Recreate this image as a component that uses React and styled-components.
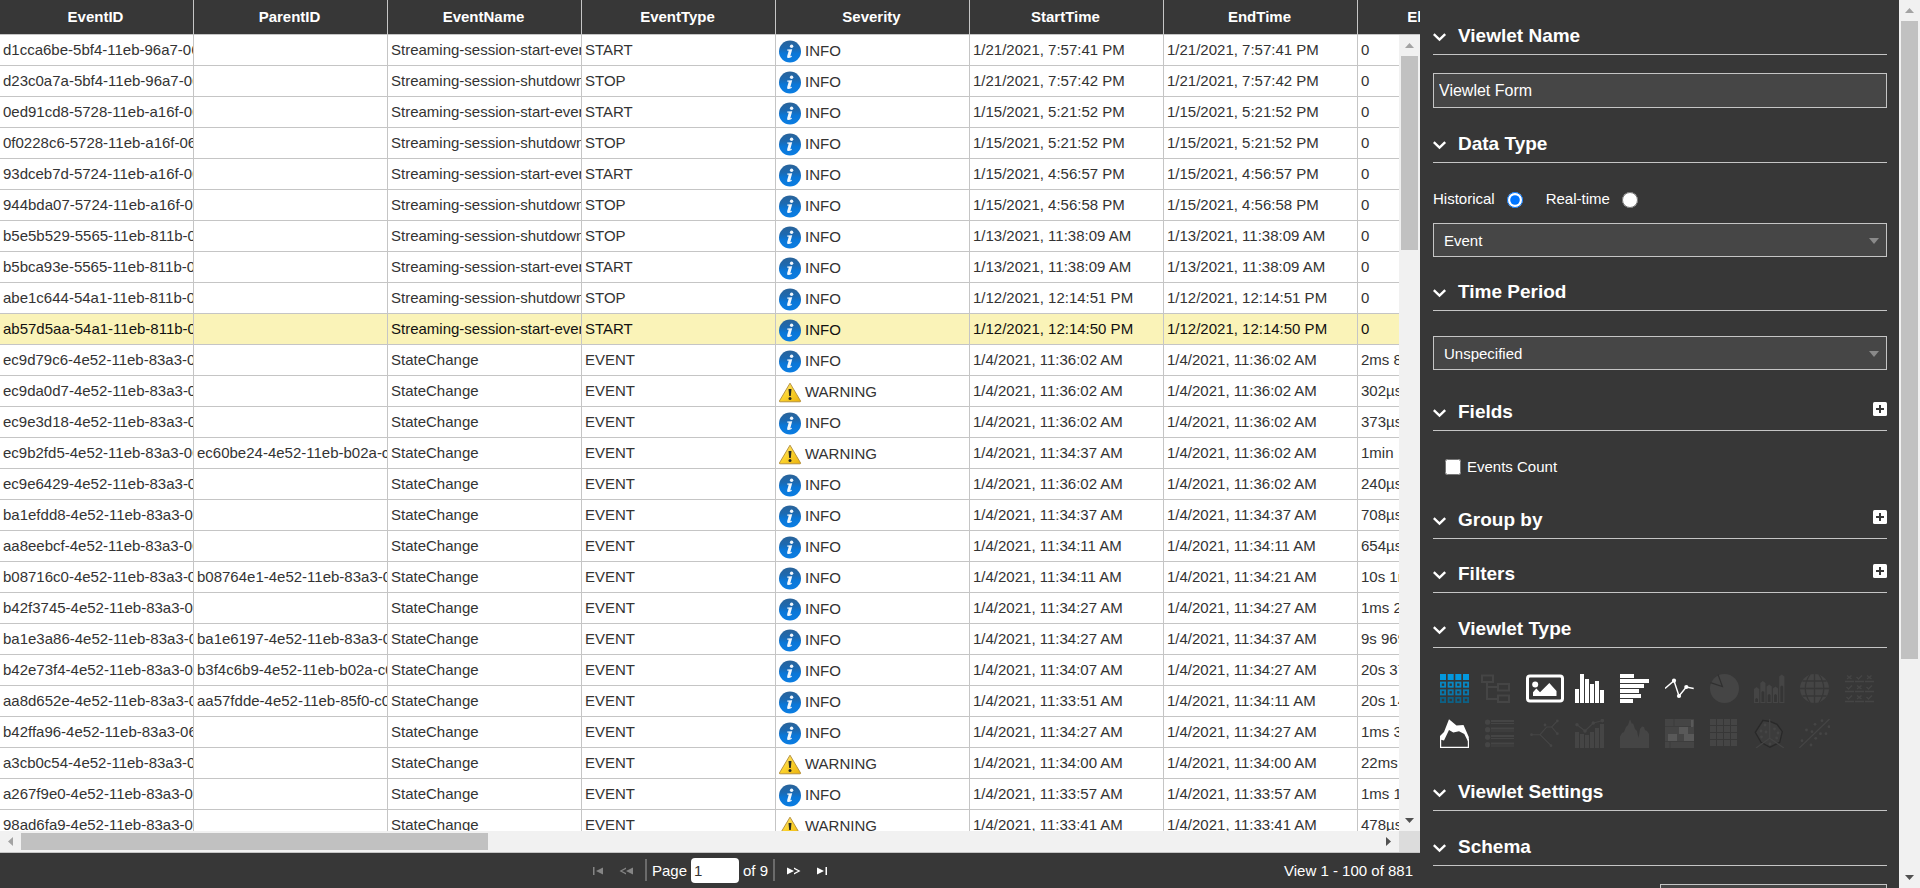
import React from "react";
import styled, { createGlobalStyle } from "styled-components";

const c = {
  dark: "#373737",
  field: "#464646",
  line: "#c5c5c5",
  text: "#333333",
  dim: "#454545",
  track: "#f1f1f1",
  thumb: "#c1c1c1",
  highlight: "#faf3b8",
};

const GlobalStyle = createGlobalStyle`
  * { box-sizing: border-box; }
  body {
    margin: 0;
    overflow: hidden;
    background: ${c.dark};
    font-family: "Liberation Sans", Arial, sans-serif;
    font-size: 15px;
  }
  button, input, select { font: inherit; }
`;

/* ---------- page frame ---------- */

const Page = styled.div`
  display: flex;
  height: 100vh;
`;

const GridPane = styled.main`
  flex: 1;
  min-width: 0;
  display: flex;
  flex-direction: column;
`;

const SidePanel = styled.aside`
  width: 479px;
  flex: none;
  overflow: hidden;
  padding: 18px 12px 0 13px;
  background: ${c.dark};
  color: #ffffff;
`;

/* ---------- scroll bars ---------- */

const Bar = styled.div`
  display: flex;
  flex: none;
  flex-direction: ${(p) => (p.$horizontal ? "row" : "column")};
  ${(p) => (p.$horizontal ? "height: 21px;" : "width: 21px;")}
  background: ${c.track};
`;

const BarButton = styled.button`
  display: grid;
  place-items: center;
  flex: none;
  width: 21px;
  height: 21px;
  padding: 0;
  border: 0;
  background: none;
  color: ${(p) => (p.$off ? "#a3a3a3" : "#505050")};
`;

const Track = styled.div`
  display: flex;
  flex: 1;
  min-width: 0;
  min-height: 0;
  flex-direction: ${(p) => (p.$horizontal ? "row" : "column")};
  padding: ${(p) => (p.$horizontal ? "2px 0" : "0 2px")};
`;

const Thumb = styled.div`
  flex: 0 0 ${(p) => p.$share}%;
  background: ${c.thumb};
`;

const arrows = {
  up: "M0 7 L4.5 2 L9 7 Z",
  down: "M0 2 L9 2 L4.5 7 Z",
  left: "M7 0 L7 9 L2 4.5 Z",
  right: "M2 0 L7 4.5 L2 9 Z",
};

const Arrow = ({ dir }) => (
  <svg width="9" height="9" viewBox="0 0 9 9" aria-hidden="true">
    <path d={arrows[dir]} fill="currentColor" />
  </svg>
);

const ScrollBar = ({ horizontal, share }) => (
  <Bar $horizontal={horizontal}>
    <BarButton $off aria-label={horizontal ? "Scroll left" : "Scroll up"}>
      <Arrow dir={horizontal ? "left" : "up"} />
    </BarButton>
    <Track $horizontal={horizontal}>
      <Thumb $share={share} />
    </Track>
    <BarButton aria-label={horizontal ? "Scroll right" : "Scroll down"}>
      <Arrow dir={horizontal ? "right" : "down"} />
    </BarButton>
  </Bar>
);

/* ---------- event table ---------- */

const HeadClip = styled.div`
  flex: none;
  overflow: hidden;
  background: ${c.dark};
  border-bottom: 1px solid ${c.line};
`;

const BodyArea = styled.div`
  flex: 1;
  min-height: 0;
  display: flex;
`;

const BodyClip = styled.div`
  flex: 1;
  min-width: 0;
  overflow: hidden;
  background: #ffffff;
`;

const BottomScroll = styled.div`
  display: flex;
  flex: none;
  border-bottom: 1px solid ${c.line};

  & > :first-child { flex: 1; }
`;

const Corner = styled.div`
  width: 21px;
  background: #dcdcdc;
`;

const Table = styled.table`
  width: 1552px;
  table-layout: fixed;
  border-collapse: separate;
  border-spacing: 0;
`;

const HeadCell = styled.th`
  width: 194px;
  height: 34px;
  padding: 0 2px 2px 0;
  border-right: 1px solid ${c.line};
  color: #ffffff;
  font-weight: bold;
  text-align: center;
`;

const Row = styled.tr`
  background: ${(p) => (p.$selected ? c.highlight : "#ffffff")};
  color: ${(p) => (p.$selected ? "#111111" : c.text)};
`;

const Cell = styled.td`
  width: 194px;
  height: 31px;
  padding: 0 0 0 3px;
  overflow: hidden;
  white-space: nowrap;
  line-height: 30px;
  border-right: 1px solid ${c.line};
  border-bottom: 1px solid ${c.line};
`;

const Severity = styled.div`
  display: flex;
  align-items: center;
  gap: 3px;
  height: 30px;
  padding-top: 2px;
`;

const InfoIcon = () => (
  <svg width="23" height="24" viewBox="1 0 23 24" aria-hidden="true">
    <defs>
      <linearGradient id="infoFill" x1="0" y1="0" x2="0" y2="1">
        <stop offset="0" stopColor="#2a6399" />
        <stop offset="0.35" stopColor="#1d69b0" />
        <stop offset="0.6" stopColor="#0a77d8" />
        <stop offset="1" stopColor="#0b7de2" />
      </linearGradient>
    </defs>
    <circle cx="12" cy="12.5" r="11" fill="url(#infoFill)" />
    <circle cx="13.6" cy="7.2" r="1.7" fill="#f2f7fc" />
    <path d="M9.3 10.6 L14.2 10.2 L12.3 17.2 L13.9 16.8 L13.6 18 Q11.8 19.2 10 19.1 Q8.7 18.9 9.2 17 L10.7 11.7 L9 11.6 Z" fill="#f2f7fc" />
  </svg>
);

const WarningIcon = () => (
  <svg width="23" height="24" viewBox="1 0 23 24" aria-hidden="true">
    <defs>
      <linearGradient id="warnFill" x1="0" y1="0" x2="1" y2="1">
        <stop offset="0" stopColor="#ffe98a" />
        <stop offset="0.5" stopColor="#fbd22c" />
        <stop offset="1" stopColor="#eab20e" />
      </linearGradient>
    </defs>
    <path d="M12 3.2 L22.6 21 Q22.8 21.8 22 21.8 L2 21.8 Q1.2 21.8 1.4 21 Z" fill="url(#warnFill)" stroke="#b08a35" strokeWidth="0.9" strokeLinejoin="round" />
    <path d="M10.5 9 H13.5 L12.8 16 H11.2 Z" fill="#2a2a20" />
    <circle cx="12" cy="18.6" r="1.5" fill="#2a2a20" />
  </svg>
);

const columns = ["EventID", "ParentID", "EventName", "EventType", "Severity", "StartTime", "EndTime", "ElapsedTime"];

const START = "Streaming-session-start-event";
const SHUT = "Streaming-session-shutdown-event";
const STATE = "StateChange";

const events = [
  ["d1cca6be-5bf4-11eb-96a7-06", "", START, "START", "INFO", "1/21/2021, 7:57:41 PM", "1/21/2021, 7:57:41 PM", "0"],
  ["d23c0a7a-5bf4-11eb-96a7-06", "", SHUT, "STOP", "INFO", "1/21/2021, 7:57:42 PM", "1/21/2021, 7:57:42 PM", "0"],
  ["0ed91cd8-5728-11eb-a16f-06", "", START, "START", "INFO", "1/15/2021, 5:21:52 PM", "1/15/2021, 5:21:52 PM", "0"],
  ["0f0228c6-5728-11eb-a16f-06", "", SHUT, "STOP", "INFO", "1/15/2021, 5:21:52 PM", "1/15/2021, 5:21:52 PM", "0"],
  ["93dceb7d-5724-11eb-a16f-06", "", START, "START", "INFO", "1/15/2021, 4:56:57 PM", "1/15/2021, 4:56:57 PM", "0"],
  ["944bda07-5724-11eb-a16f-06", "", SHUT, "STOP", "INFO", "1/15/2021, 4:56:58 PM", "1/15/2021, 4:56:58 PM", "0"],
  ["b5e5b529-5565-11eb-811b-06", "", SHUT, "STOP", "INFO", "1/13/2021, 11:38:09 AM", "1/13/2021, 11:38:09 AM", "0"],
  ["b5bca93e-5565-11eb-811b-06", "", START, "START", "INFO", "1/13/2021, 11:38:09 AM", "1/13/2021, 11:38:09 AM", "0"],
  ["abe1c644-54a1-11eb-811b-06", "", SHUT, "STOP", "INFO", "1/12/2021, 12:14:51 PM", "1/12/2021, 12:14:51 PM", "0"],
  ["ab57d5aa-54a1-11eb-811b-06", "", START, "START", "INFO", "1/12/2021, 12:14:50 PM", "1/12/2021, 12:14:50 PM", "0"],
  ["ec9d79c6-4e52-11eb-83a3-06", "", STATE, "EVENT", "INFO", "1/4/2021, 11:36:02 AM", "1/4/2021, 11:36:02 AM", "2ms 81µs"],
  ["ec9da0d7-4e52-11eb-83a3-06", "", STATE, "EVENT", "WARNING", "1/4/2021, 11:36:02 AM", "1/4/2021, 11:36:02 AM", "302µs"],
  ["ec9e3d18-4e52-11eb-83a3-06", "", STATE, "EVENT", "INFO", "1/4/2021, 11:36:02 AM", "1/4/2021, 11:36:02 AM", "373µs"],
  ["ec9b2fd5-4e52-11eb-83a3-06", "ec60be24-4e52-11eb-b02a-c0", STATE, "EVENT", "WARNING", "1/4/2021, 11:34:37 AM", "1/4/2021, 11:36:02 AM", "1min"],
  ["ec9e6429-4e52-11eb-83a3-06", "", STATE, "EVENT", "INFO", "1/4/2021, 11:36:02 AM", "1/4/2021, 11:36:02 AM", "240µs"],
  ["ba1efdd8-4e52-11eb-83a3-06", "", STATE, "EVENT", "INFO", "1/4/2021, 11:34:37 AM", "1/4/2021, 11:34:37 AM", "708µs"],
  ["aa8eebcf-4e52-11eb-83a3-06", "", STATE, "EVENT", "INFO", "1/4/2021, 11:34:11 AM", "1/4/2021, 11:34:11 AM", "654µs"],
  ["b08716c0-4e52-11eb-83a3-06", "b08764e1-4e52-11eb-83a3-06", STATE, "EVENT", "INFO", "1/4/2021, 11:34:11 AM", "1/4/2021, 11:34:21 AM", "10s 1ms"],
  ["b42f3745-4e52-11eb-83a3-06", "", STATE, "EVENT", "INFO", "1/4/2021, 11:34:27 AM", "1/4/2021, 11:34:27 AM", "1ms 21µs"],
  ["ba1e3a86-4e52-11eb-83a3-06", "ba1e6197-4e52-11eb-83a3-06", STATE, "EVENT", "INFO", "1/4/2021, 11:34:27 AM", "1/4/2021, 11:34:37 AM", "9s 969ms"],
  ["b42e73f4-4e52-11eb-83a3-06", "b3f4c6b9-4e52-11eb-b02a-c0", STATE, "EVENT", "INFO", "1/4/2021, 11:34:07 AM", "1/4/2021, 11:34:27 AM", "20s 37ms"],
  ["aa8d652e-4e52-11eb-83a3-06", "aa57fdde-4e52-11eb-85f0-c0", STATE, "EVENT", "INFO", "1/4/2021, 11:33:51 AM", "1/4/2021, 11:34:11 AM", "20s 14ms"],
  ["b42ffa96-4e52-11eb-83a3-06", "", STATE, "EVENT", "INFO", "1/4/2021, 11:34:27 AM", "1/4/2021, 11:34:27 AM", "1ms 31µs"],
  ["a3cb0c54-4e52-11eb-83a3-06", "", STATE, "EVENT", "WARNING", "1/4/2021, 11:34:00 AM", "1/4/2021, 11:34:00 AM", "22ms"],
  ["a267f9e0-4e52-11eb-83a3-06", "", STATE, "EVENT", "INFO", "1/4/2021, 11:33:57 AM", "1/4/2021, 11:33:57 AM", "1ms 11µs"],
  ["98ad6fa9-4e52-11eb-83a3-06", "", STATE, "EVENT", "WARNING", "1/4/2021, 11:33:41 AM", "1/4/2021, 11:33:41 AM", "478µs"],
];

const selectedId = "ab57d5aa-54a1-11eb-811b-06";

const EventTable = () => (
  <>
    <HeadClip>
      <Table>
        <thead>
          <tr>
            {columns.map((name) => (
              <HeadCell key={name} scope="col">{name}</HeadCell>
            ))}
          </tr>
        </thead>
      </Table>
    </HeadClip>
    <BodyArea>
      <BodyClip>
        <Table aria-label="Events">
          <tbody>
            {events.map((event) => (
              <Row key={event[0]} $selected={event[0] === selectedId}>
                {event.map((value, i) => (
                  <Cell key={columns[i]}>
                    {columns[i] === "Severity" ? (
                      <Severity>
                        {value === "INFO" ? <InfoIcon /> : <WarningIcon />}
                        {value}
                      </Severity>
                    ) : (
                      value
                    )}
                  </Cell>
                ))}
              </Row>
            ))}
          </tbody>
        </Table>
      </BodyClip>
      <ScrollBar share={25.7} />
    </BodyArea>
    <BottomScroll>
      <ScrollBar horizontal share={34.4} />
      <Corner />
    </BottomScroll>
  </>
);

/* ---------- pager ---------- */

const Pager = styled.footer`
  flex: none;
  display: grid;
  grid-template-columns: 1fr auto 1fr;
  align-items: center;
  height: 35px;
  padding-bottom: 1px;
  background: ${c.dark};
  color: #ffffff;
`;

const PagerGroup = styled.nav`
  grid-column: 2;
  display: flex;
  align-items: center;
`;

const PagerButton = styled.button`
  display: grid;
  place-items: center;
  width: 28px;
  height: 22px;
  padding: 2px 0 0;
  border: 0;
  background: none;
  color: ${(p) => (p.disabled ? "#858585" : "#ffffff")};
`;

const Separator = styled.span`
  width: 2px;
  height: 22px;
  margin: 0 5px;
  background: #6b6b6b;
`;

const PageLabel = styled.label`
  display: flex;
  align-items: center;
  gap: 4px;
`;

const PageInput = styled.input`
  width: 48px;
  height: 25px;
  padding: 0 3px;
  border: 0;
  border-radius: 4px;
  background: #ffffff;
  color: ${c.text};
`;

const PagerInfo = styled.span`
  justify-self: end;
  padding-right: 7px;
`;

const pagerShapes = {
  first: ["M1 0 H2.5 V8 H1 Z", "M11 0.5 V7.5 L4 4 Z"],
  prev: ["M7 0.5 L7 2 L3 4 L7 6 L7 7.5 L0.5 4 Z", "M14 0.5 V7.5 L7 4 Z"],
  next: ["M0 0.5 V7.5 L7 4 Z", "M7 0.5 L7 2 L11 4 L7 6 L7 7.5 L13.5 4 Z"],
  last: ["M0 0.5 V7.5 L7 4 Z", "M8.5 0 H10 V8 H8.5 Z"],
};

const PagerIcon = ({ kind, width }) => (
  <svg width={width} height="8" viewBox={`0 0 ${width} 8`} aria-hidden="true">
    {pagerShapes[kind].map((d) => (
      <path key={d} d={d} fill="currentColor" />
    ))}
  </svg>
);

const PagerBar = () => (
  <Pager>
    <PagerGroup aria-label="Pages">
      <PagerButton disabled aria-label="First page"><PagerIcon kind="first" width={11} /></PagerButton>
      <PagerButton disabled aria-label="Previous page"><PagerIcon kind="prev" width={14} /></PagerButton>
      <Separator />
      <PageLabel>
        Page
        <PageInput defaultValue="1" />
        of 9
      </PageLabel>
      <Separator />
      <PagerButton aria-label="Next page"><PagerIcon kind="next" width={14} /></PagerButton>
      <PagerButton aria-label="Last page"><PagerIcon kind="last" width={11} /></PagerButton>
    </PagerGroup>
    <PagerInfo>View 1 - 100 of 881</PagerInfo>
  </Pager>
);

/* ---------- side panel ---------- */

const SectionBox = styled.section`
  padding-bottom: ${(p) => p.$after}px;
`;

const SectionHead = styled.header`
  display: flex;
  align-items: center;
  height: 37px;
  border-bottom: 1px solid ${c.line};
`;

const Toggle = styled.button`
  width: 14px;
  height: 14px;
  margin: 2px 11px 0 0;
  padding: 0;
  border: 0;
  background: none;
  color: #ffffff;

  svg { display: block; }
`;

const Title = styled.h2`
  flex: 1;
  margin: 0;
  padding-bottom: 1px;
  font-size: 19px;
  font-weight: bold;
`;

const AddButton = styled.button`
  width: 14px;
  height: 14px;
  margin-bottom: 7px;
  padding: 0;
  border: 0;
  background: none;

  svg { display: block; }
`;

const Section = ({ title, addable, after = 18, children }) => (
  <SectionBox $after={after}>
    <SectionHead>
      <Toggle aria-label={`Collapse ${title}`}>
        <svg width="14" height="14" viewBox="0 0 14 14" fill="none" aria-hidden="true">
          <path d="M0.8 4.2 L6.5 9.6 L12.2 4.2" stroke="currentColor" strokeWidth="2.4" />
        </svg>
      </Toggle>
      <Title>{title}</Title>
      {addable && (
        <AddButton aria-label={`Add to ${title}`}>
          <svg width="14" height="14" viewBox="0 0 14 14" aria-hidden="true">
            <rect width="14" height="14" rx="1.5" fill="#ffffff" />
            <path d="M3 7 H11 M7 3 V11" stroke={c.dark} strokeWidth="2" />
          </svg>
        </AddButton>
      )}
    </SectionHead>
    {children}
  </SectionBox>
);

const Body = styled.div`
  padding-top: ${(p) => p.$top}px;
`;

const TextField = styled.input`
  display: block;
  width: 100%;
  height: 35px;
  padding: 0 5px;
  border: 1px solid ${c.line};
  border-radius: 0;
  background: ${c.field};
  color: #ffffff;
  font-size: 16px;
`;

const SchemaField = styled(TextField)`
  width: 50%;
  margin-left: auto;
`;

const RadioRow = styled.div`
  display: flex;
  gap: 23px;
  height: 34px;
  margin-bottom: 8px;
`;

const RadioLabel = styled.label`
  display: flex;
  align-items: center;
  gap: 12px;

  input {
    width: 16px;
    height: 16px;
    margin: 3px 0 0;
  }
`;

const SelectWrap = styled.div`
  position: relative;

  svg {
    position: absolute;
    right: 8px;
    top: 15px;
    pointer-events: none;
  }
`;

const SelectBox = styled.select`
  display: block;
  appearance: none;
  width: 100%;
  height: 34px;
  padding: 0 24px 0 10px;
  border: 1px solid ${c.line};
  border-radius: 0;
  background: ${c.field};
  color: #ffffff;
`;

const Select = ({ label, value }) => (
  <SelectWrap>
    <SelectBox aria-label={label}>
      <option>{value}</option>
    </SelectBox>
    <svg width="10" height="6" viewBox="0 0 10 6" aria-hidden="true">
      <path d="M0 0 H10 L5 6 Z" fill="#8a8a8a" />
    </svg>
  </SelectWrap>
);

const CheckLabel = styled.label`
  display: flex;
  align-items: center;
  gap: 6px;
  height: 70px;
  padding-left: 12px;

  input {
    width: 16px;
    height: 16px;
    margin: 1px 0 0;
  }
`;

const TypeGrid = styled.div`
  display: grid;
  grid-template-columns: repeat(10, 45px);
  grid-auto-rows: 45px;
  margin-left: -1px;
`;

const TypeButton = styled.button`
  display: grid;
  place-items: center;
  padding: 0;
  border: 0;
  background: none;
  color: ${(p) => (p.disabled ? c.dim : "#ffffff")};
`;

const bars = (list) =>
  list.map(([x, y, w, h]) => <rect key={`${x}-${y}`} x={x} y={y} width={w} height={h} fill="currentColor" />);

const dots = (list, r) =>
  list.map(([x, y]) => <circle key={`${x}-${y}`} cx={x} cy={y} r={r} fill="currentColor" />);

const gridShades = ["#0398de", "#0788c4", "#0a78ac", "#0d6186"];

const viewletTypes = [
  {
    name: "Table",
    art: gridShades.map((shade, r) =>
      [0, 7.67, 15.33, 23].map((x) =>
        r === 0 ? (
          <rect key={x} x={x} y="0" width="6" height="6" fill={shade} />
        ) : (
          <rect key={x} x={x + 0.9} y={r * 7.67 + 0.9} width="4.2" height="4.2" fill="none" stroke={shade} strokeWidth="1.8" />
        )
      )
    ),
  },
  {
    name: "Tree",
    off: true,
    width: 38,
    art: (
      <path d="M1 1.5 H12 V8 H1 Z M17 10 H28 V16.5 H17 Z M17 21.5 H28 V28 H17 Z M6 8 V25 H17 M6 13 H17" fill="none" stroke="currentColor" strokeWidth="2" />
    ),
  },
  {
    name: "Image",
    width: 38,
    art: (
      <>
        <rect x="1.5" y="2" width="35" height="25" rx="2.5" fill="none" stroke="currentColor" strokeWidth="3" />
        <circle cx="9.2" cy="10.5" r="3" fill="currentColor" />
        <path d="M7 22 V18.3 L10.3 14.6 L14 18.3 L23.3 9 L30.5 17 V22 Z" fill="currentColor" />
      </>
    ),
  },
  { name: "Column chart", art: bars([[0, 15, 4, 14], [5, 0, 4, 29], [10, 5, 4, 24], [15, 10, 4, 19], [20, 7, 4, 22], [25, 16, 4, 13]]) },
  { name: "Bar chart", art: bars([[0, 0, 14, 4], [0, 5, 29, 4], [0, 10, 24, 4], [0, 15, 19, 4], [0, 20, 21, 4], [0, 25, 13, 4]]) },
  {
    name: "Line chart",
    art: (
      <>
        <path d="M0 14.5 L9 6.7 L14 22 L21.3 13 L28.7 14.5" fill="none" stroke="currentColor" strokeWidth="1.4" />
        {dots([[9, 6.7], [14, 22], [21.3, 13]], 2.1)}
      </>
    ),
  },
  {
    name: "Pie chart",
    off: true,
    art: (
      <>
        <circle cx="14.5" cy="14.5" r="14.5" fill="currentColor" />
        <path d="M8 0.5 L12.4 12.6 L0.5 8.6" fill="none" stroke="#303030" strokeWidth="1.2" />
      </>
    ),
  },
  {
    name: "Candlestick chart",
    width: 31,
    off: true,
    art: [[0, 13, 24], [6.3, 7, 17], [12.6, 10.5, 20], [18.9, 12.5, 20], [25.2, 0.5, 11.5]].map(([x, top, mid]) => (
      <g key={x}>
        <path d={`M${x} 29 V${top + 2} L${x + 2.6} ${top} L${x + 5.2} ${top + 2} V29 Z`} fill="currentColor" />
        <path d={`M${x + 1.2} 28 V${mid + 1} L${x + 2.6} ${mid} L${x + 4} ${mid + 1} V28 Z`} fill="#353535" />
      </g>
    )),
  },
  {
    name: "Map",
    off: true,
    art: (
      <>
        <circle cx="14.5" cy="14.5" r="14.5" fill="currentColor" />
        <path d="M14.5 0 V29 M0 14.5 H29 M2.5 7 H26.5 M2.5 22 H26.5 M10 0.5 Q0.5 14.5 10 28.5 M19 0.5 Q28.5 14.5 19 28.5" fill="none" stroke={c.dark} strokeWidth="1.3" />
      </>
    ),
  },
  {
    name: "Score card",
    off: true,
    art: (
      <path
        d="M0 7.5 H9 M10 7.5 H19 M20 7.5 H29 M0 17.5 H9 M10 17.5 H19 M20 17.5 H29 M0 27.5 H9 M10 27.5 H19 M20 27.5 H29
           M2 1.5 L6.5 5 M6.5 1.5 L2 5 M11.5 3 L13.5 5 L17 1.5 M22 1.5 L26.5 5 M26.5 1.5 L22 5
           M1.5 13 L3.5 15 L7 11.5 M12 11.5 L16.5 15 M16.5 11.5 L12 15 M21.5 13 L23.5 15 L27 11.5
           M1.5 23 L3.5 25 L7 21.5 M12 21.5 L16.5 25 M16.5 21.5 L12 25 M21.5 23 L23.5 25 L27 21.5"
        fill="none"
        stroke="currentColor"
        strokeWidth="1.3"
      />
    ),
  },
  {
    name: "Area chart",
    art: (
      <>
        <path d="M0 17 L4 13 L9 0.3 L16.5 6.5 L23.5 6 L28.8 18 V24 L24.3 15 L19 12.2 L13.3 13.6 L9 11 L4 21.5 L0 20.5 Z" fill="currentColor" />
        <path d="M0.6 18 V28.3 H28.4 V20" fill="none" stroke="currentColor" strokeWidth="1.2" />
      </>
    ),
  },
  {
    name: "List",
    off: true,
    art: (
      <>
        {dots([[2.6, 3.2], [2.6, 10.7], [2.6, 18.2], [2.6, 25.7]], 2.6)}
        {bars([[6, 1, 23, 2], [6, 4, 23, 1], [6, 8.5, 23, 2], [6, 11.5, 23, 1], [6, 16, 23, 2], [6, 19, 23, 1], [6, 23.5, 23, 2], [6, 26.5, 23, 1]])}
      </>
    ),
  },
  {
    name: "Topology",
    off: true,
    art: (
      <>
        <path d="M1.5 15.7 H10 L16.7 8 H21.7 L27.3 2 M21.7 8 L27.3 14.7 M10 15.7 L21 26.7" fill="none" stroke="currentColor" strokeWidth="1.1" />
        {dots([[1.5, 15.7], [15, 6], [27.3, 2], [27.3, 14.7], [21, 26.7]], 1.4)}
      </>
    ),
  },
  {
    name: "Combined chart",
    off: true,
    art: (
      <>
        {bars([[0, 13, 4, 16], [5, 15, 4, 14], [10, 16, 4, 13], [15, 13, 4, 16], [20, 9, 4, 20], [25, 5, 4, 24]])}
        <path d="M2 5.7 L10 12 L18.3 4 L28 1.5" fill="none" stroke="currentColor" strokeWidth="1.2" />
        {dots([[2, 5.7], [10, 12], [18.3, 4], [27.3, 1.6]], 1.8)}
      </>
    ),
  },
  {
    name: "Histogram",
    off: true,
    art: <path d="M0 29 V17.5 L2 14 L4 13 L6 8 L8 6 L10 0.3 L12 5 L13 4 L15 10 L17 12 L18.5 19 L20 10 L22 7.5 L24 8 L25 11 L27 12 L29 15 V29 Z" fill="currentColor" />,
  },
  {
    name: "Heat map",
    off: true,
    art: (
      <>
        <rect width="29" height="29" fill="currentColor" />
        <path d="M9 0 V7 M5 22 V29 M0 7.5 H29 M0 22.5 H29" stroke="#3d3d3d" strokeWidth="1" />
        <path d="M14 8 H23 V15 H14 Z M3 15 H12 V22 H3 Z M19 15 H29 V22 H19 Z M26 1 H28.5 V8 H26 Z" fill="#595959" />
      </>
    ),
  },
  {
    name: "Pivot table",
    off: true,
    art: [0, 7, 14, 21].map((y) => [0, 7, 14, 21].map((x) => <rect key={`${x}-${y}`} x={x} y={y} width="6" height="6" fill="currentColor" />)),
  },
  {
    name: "Radar chart",
    off: true,
    width: 31,
    art: (
      <>
        <path d="M9 1.3 L16 2.5 L23 5.3 L28.3 12.7 L25.7 23.3 L16 28.2 L7 23.3 L1.3 13.3 Z" fill="#3c3c3c" stroke="#292929" strokeWidth="1.3" />
        <path d="M15.7 0 V19.3 L2 29 M15.7 19.3 L30 29" fill="none" stroke="currentColor" strokeWidth="1.2" />
        {dots([[11, 6], [7, 12], [7.5, 18], [12, 13], [20.5, 10], [24, 14], [22.7, 19], [16, 25]], 1.4)}
      </>
    ),
  },
  {
    name: "Scatter chart",
    off: true,
    width: 31,
    art: (
      <>
        <path d="M0.3 29 L30.5 0" stroke="currentColor" strokeWidth="1.2" />
        {dots([[3, 21.7], [12, 26], [16.7, 19.3], [7.5, 11], [13, 12.7], [21.5, 14.7], [27, 14.7], [16, 5.3], [23, 1.7], [30, 7.7]], 1.4)}
      </>
    ),
  },
];

const ViewletPanel = () => (
  <SidePanel>
    <Section title="Viewlet Name">
      <Body $top={18}>
        <TextField aria-label="Viewlet Name" defaultValue="Viewlet Form" />
      </Body>
    </Section>
    <Section title="Data Type" after={17}>
      <Body $top={18}>
        <RadioRow>
          <RadioLabel>
            Historical
            <input type="radio" name="dataType" defaultChecked />
          </RadioLabel>
          <RadioLabel>
            Real-time
            <input type="radio" name="dataType" />
          </RadioLabel>
        </RadioRow>
        <Select label="Data Type" value="Event" />
      </Body>
    </Section>
    <Section title="Time Period" after={24}>
      <Body $top={25}>
        <Select label="Time Period" value="Unspecified" />
      </Body>
    </Section>
    <Section title="Fields" addable after={1}>
      <CheckLabel>
        <input type="checkbox" />
        Events Count
      </CheckLabel>
    </Section>
    <Section title="Group by" addable after={17} />
    <Section title="Filters" addable />
    <Section title="Viewlet Type">
      <Body $top={18}>
        <TypeGrid>
          {viewletTypes.map(({ name, off, width = 29, art }) => (
            <TypeButton key={name} disabled={off} aria-label={name}>
              <svg width={width} height="29" viewBox={`0 0 ${width} 29`} aria-hidden="true">
                {art}
              </svg>
            </TypeButton>
          ))}
        </TypeGrid>
      </Body>
    </Section>
    <Section title="Viewlet Settings" />
    <Section title="Schema">
      <Body $top={18}>
        <SchemaField aria-label="Schema" />
      </Body>
    </Section>
  </SidePanel>
);

export default function App() {
  return (
    <>
      <GlobalStyle />
      <Page>
        <GridPane>
          <EventTable />
          <PagerBar />
        </GridPane>
        <ViewletPanel />
        <ScrollBar share={75.4} />
      </Page>
    </>
  );
}
